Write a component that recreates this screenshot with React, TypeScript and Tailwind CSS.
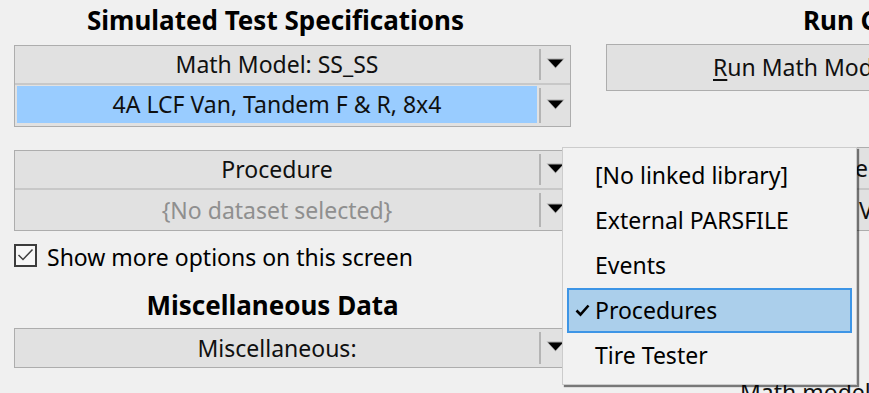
import {Fragment} from 'react'

type Row = {
  text: string
  tone?: 'normal' | 'selected' | 'disabled'
  h: string
}

const Arrow = () => (
  <svg width="19" height="11" viewBox="0 0 19 11" className="block">
    <polygon points="0.5,0.5 18.5,0.5 9.5,10.5" fill="#7a7a7a" opacity="0.5" />
    <polygon points="2,1.5 17,1.5 9.5,9.5" fill="#000" />
  </svg>
)

// Windows-style combo box stack, rows share one border
const ComboStack = ({rows}: {rows: Row[]}) => (
  <div className="w-[557px] border border-[#adadad] bg-[#e1e1e1]">
    {rows.map((row, i) => (
      <Fragment key={i}>
        {i > 0 && <div className="h-[2px] bg-[#c8c8c8]" />}
        <div className={`flex ${row.h}`}>
          <div
            className={
              row.tone === 'selected'
                ? 'flex-1 flex items-center justify-center bg-[#99ccff] ml-[2px] mr-[2px] mt-[1px] mb-[3px] text-[#101010]'
                : row.tone === 'disabled'
                  ? 'flex-1 flex items-center justify-center text-[#8f8f8f]'
                  : 'flex-1 flex items-center justify-center text-[#101010]'
            }
          >
            {row.text}
          </div>
          <div className="w-[2px] my-[3px] bg-[#b4b4b4]" />
          <div className="w-[29px] flex items-center justify-center pb-[3px]">
            <Arrow />
          </div>
        </div>
      </Fragment>
    ))}
  </div>
)

const menuItems = ['[No linked library]', 'External PARSFILE', 'Events', 'Procedures', 'Tire Tester']

export default function App() {
  return (
    <div
      className="relative w-[869px] h-[393px] overflow-hidden bg-[#f0f0f0] text-[23px] leading-none text-black"
      style={{fontFamily: '"Noto Sans", "Open Sans", sans-serif'}}
    >
      <div className="flex">
        {/* left column */}
        <div className="ml-[14px] w-[557px] shrink-0">
          <div className="h-[40px] flex items-center justify-center pr-[34px] font-bold text-[26px]">
            Simulated Test Specifications
          </div>
          <div className="mt-[5px]">
            <ComboStack
              rows={[
                {text: 'Math Model: SS_SS', h: 'h-[37px]'},
                {text: '4A LCF Van, Tandem F & R, 8x4', tone: 'selected', h: 'h-[41px]'},
              ]}
            />
          </div>
          <div className="mt-[23px]">
            <ComboStack
              rows={[
                {text: 'Procedure', h: 'h-[37px]'},
                {text: '{No dataset selected}', tone: 'disabled', h: 'h-[40px]'},
              ]}
            />
          </div>
          <div className="mt-[12px] h-[24px] flex items-center">
            <div className="w-[23px] h-[23px] border-2 border-[#3c3c3c] bg-[#f7f7f7] flex items-center justify-center">
              <svg width="17" height="14" viewBox="0 0 17 14">
                <polyline points="1.5,7 6,11.5 15.5,1.5" fill="none" stroke="#404040" strokeWidth="1.5" />
              </svg>
            </div>
            <span className="ml-[10px] pt-[4px]">Show more options on this screen</span>
          </div>
          <div className="mt-[18px] h-[40px] flex items-center justify-center pr-[40px] font-bold text-[26px]">
            Miscellaneous Data
          </div>
          <div className="mt-[3px]">
            <ComboStack rows={[{text: 'Miscellaneous:', h: 'h-[38px]'}]} />
          </div>
        </div>

        {/* right column, mostly cut off by the window */}
        <div className="ml-[35px] w-[400px] shrink-0">
          <div className="h-[40px] flex items-center pl-[197px] font-bold text-[26px] whitespace-nowrap">
            Run Control
          </div>
          <div className="mt-[4px] h-[47px] border border-[#adadad] bg-[#e1e1e1] flex items-center pl-[106px] whitespace-nowrap text-[#101010]">
            <span>
              <span className="underline underline-offset-[3px]">R</span>un Math Model
            </span>
          </div>
          <div className="mt-[56px] border border-[#adadad] bg-[#e1e1e1] whitespace-nowrap text-[#101010]">
            <div className="h-[40px] flex items-center pl-[248px]">er Models</div>
            <div className="h-[2px] bg-[#c8c8c8]" />
            <div className="h-[40px] flex items-center pl-[252px]">Video + Plot</div>
          </div>
          <div className="mt-[150px] pl-[134px] whitespace-nowrap text-[#101010]">Math model</div>
        </div>
      </div>

      {/* open dropdown menu */}
      <div className="absolute left-[562px] top-[147px] w-[295px] h-[238px] bg-[#f2f2f2] border border-[#cccccc] shadow-[2px_2px_1px_rgba(0,0,0,0.5)] pt-[5px] px-[4px]">
        {menuItems.map((item) => (
          <div
            key={item}
            className={
              item === 'Procedures'
                ? 'h-[45px] flex items-center border-2 border-[#3d95e6] bg-[#abcfeb]'
                : 'h-[45px] flex items-center border-2 border-transparent'
            }
          >
            <span className="w-[26px] flex justify-center">
              {item === 'Procedures' && (
                <svg width="15" height="13" viewBox="0 0 15 13">
                  <polyline points="1.5,6.5 5.5,10.5 13.5,1.5" fill="none" stroke="#000" strokeWidth="2.6" />
                </svg>
              )}
            </span>
            <span>{item}</span>
          </div>
        ))}
      </div>
    </div>
  )
}
